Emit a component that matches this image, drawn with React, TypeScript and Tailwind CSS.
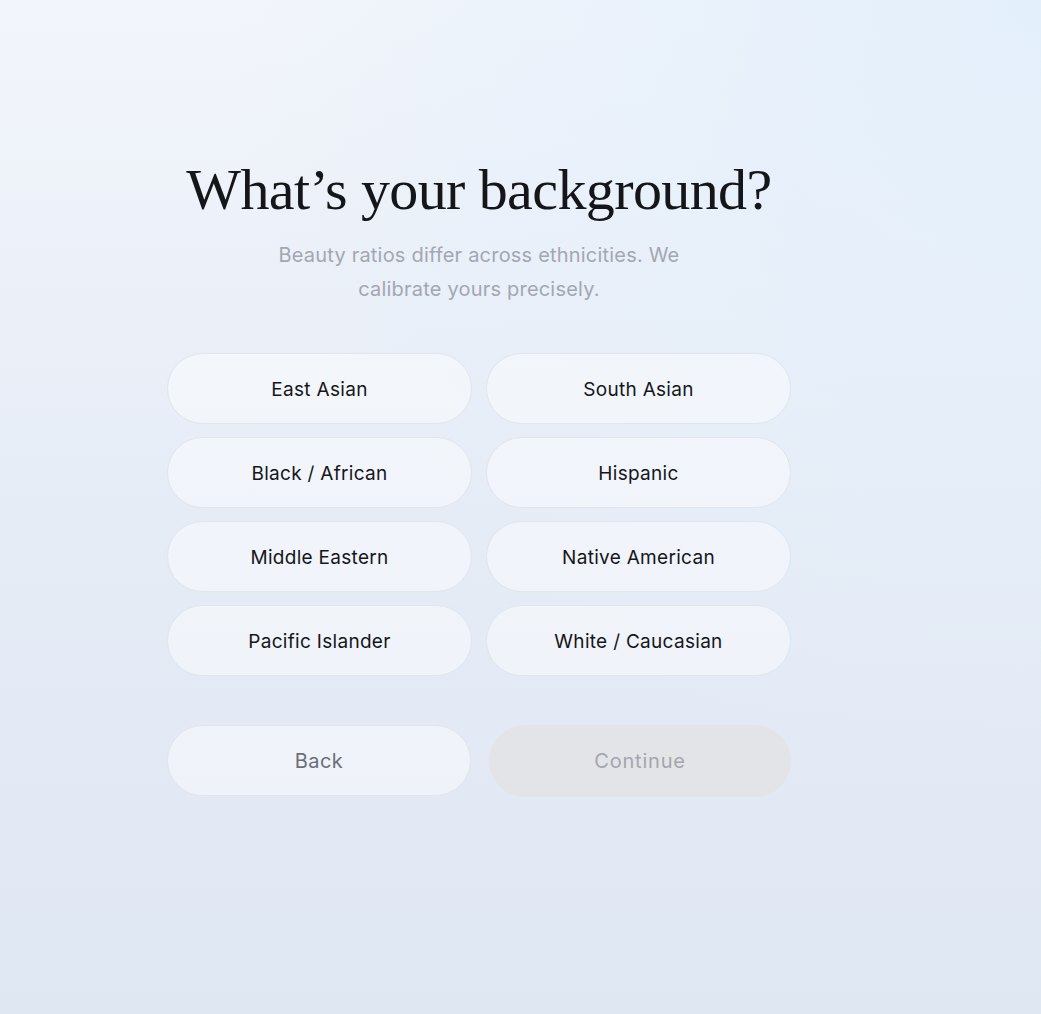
import React from "react";

const options = [
  "East Asian",
  "South Asian",
  "Black / African",
  "Hispanic",
  "Middle Eastern",
  "Native American",
  "Pacific Islander",
  "White / Caucasian",
];

export default function App() {
  return (
    <div
      className="min-h-[1014px] w-full bg-[radial-gradient(ellipse_at_top_right,#e3effb_0%,rgba(227,239,251,0)_55%),linear-gradient(180deg,#f2f5fb_0%,#e6ecf6_50%,#dfe7f3_100%)]"
      style={{ fontFamily: "Inter, 'Noto Sans', sans-serif" }}
    >
      <div className="flex pl-[167px] pt-[158px]">
        <div className="flex w-[624px] flex-col items-center">
          <h1
            className="text-[58px] leading-[64px] tracking-[-0.6px] text-[#15161a]"
            style={{ fontFamily: "'Liberation Serif', 'DejaVu Serif', serif" }}
          >
            What’s your background?
          </h1>
          <p className="mt-[16px] w-[440px] text-center text-[20px] leading-[34px] tracking-[0.2px] text-[#a3a7b1]">
            Beauty ratios differ across ethnicities. We calibrate yours precisely.
          </p>

          <div className="mt-[47px] grid w-full grid-cols-2 gap-x-[14px] gap-y-[13px]">
            {options.map((o) => (
              <button
                key={o}
                className="flex h-[71px] items-center justify-center rounded-full border border-[#e0e5ee] bg-[rgba(255,255,255,0.45)] pt-[3px] text-[19px] tracking-[0.3px] text-[#15161a]"
              >
                {o}
              </button>
            ))}
          </div>

          <div className="mt-[49px] flex w-full gap-[18px]">
            <button className="flex h-[71px] flex-1 items-center justify-center rounded-full border border-[#e0e5ee] bg-[rgba(255,255,255,0.45)] text-[20px] tracking-[0.4px] text-[#6b6f7a]">
              Back
            </button>
            <button className="flex h-[72px] flex-1 items-center justify-center rounded-full bg-[#e3e4e8] text-[20px] tracking-[0.8px] text-[#a4a6ae]">
              Continue
            </button>
          </div>
        </div>
      </div>
    </div>
  );
}
